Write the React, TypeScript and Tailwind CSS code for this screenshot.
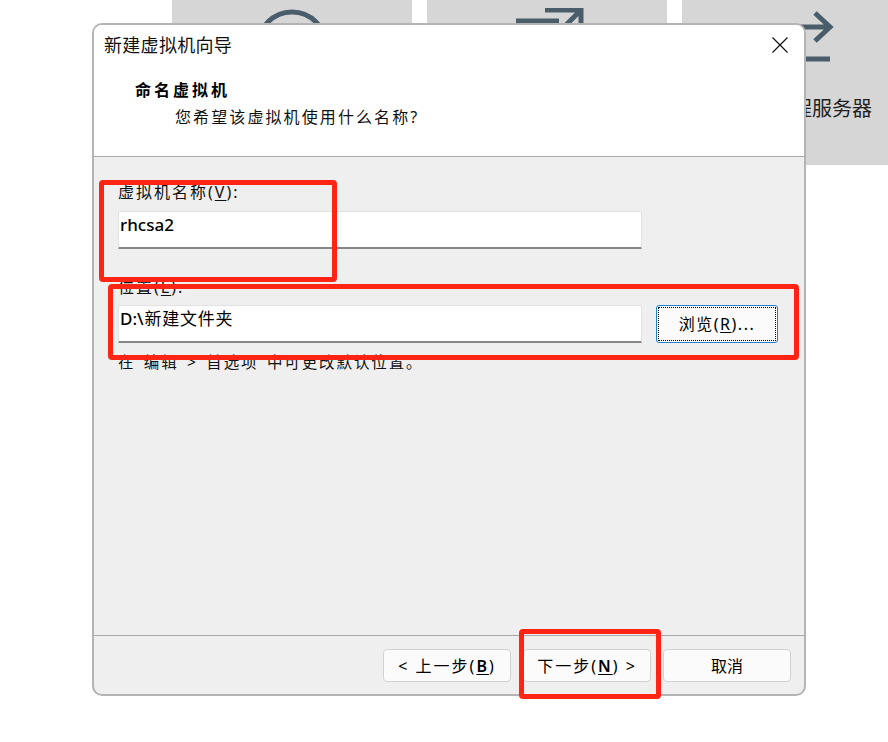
const iconColor = "#4a5d6b";

function Tile({ children, label }: { children: React.ReactNode; label?: string }) {
  return (
    <div className="w-[240px] h-[165px] shrink-0 bg-[#d6d6d6] flex flex-col items-center pt-[8px]">
      <svg width="100" height="70" viewBox="0 0 100 70" fill="none" stroke={iconColor} strokeWidth="5">
        {children}
      </svg>
      {label && <div className="mt-[17px] text-[20px] leading-[28px] text-[#222] whitespace-nowrap">{label}</div>}
    </div>
  );
}

function Mnemonic({ before, k, after }: { before: string; k: string; after?: string }) {
  return (
    <>
      {before}(<u className="underline-offset-2">{k}</u>){after}
    </>
  );
}

function WizardButton({ children, tracking }: { children: React.ReactNode; tracking?: boolean }) {
  return (
    <button className={`w-[128px] h-[33px] rounded-[4px] border border-[#d2d2d2] bg-[#fbfbfb] text-[16px] leading-none text-black whitespace-nowrap ${tracking ? "tracking-[2px]" : ""}`}>
      {children}
    </button>
  );
}

function TextField({ children }: { children: React.ReactNode }) {
  return (
    <div className="w-[524px] h-[38px] shrink-0 bg-white border border-[#e2e2e2] border-b-2 border-b-[#868686] rounded-[1px] pl-[1px] pt-[1px] text-[17px] leading-[24px] font-medium text-black">
      {children}
    </div>
  );
}

export default function App() {
  return (
    <div className="relative w-[888px] h-[742px] bg-white overflow-hidden font-['Noto_Sans','Noto_Sans_CJK_SC',sans-serif]">
      <div className="flex gap-[15px] pl-[172px]">
        <Tile>
          <circle cx="50" cy="38" r="34" />
        </Tile>
        <Tile>
          <path d="M21.5 60V13H62" />
          <path d="M48 2H84V20M84 2L50 36" />
        </Tile>
        <Tile label="连接远程服务器">
          <path d="M20 19H78M63 5L78 19L63 33" />
          <path d="M20 51H78" />
        </Tile>
      </div>

      {/* wizard window */}
      <div className="absolute left-[92px] top-[23px] w-[714px] h-[673px] flex flex-col rounded-[10px] border-2 border-[#b4b4b4] bg-[#efefef] overflow-hidden">
        <div className="relative h-[132px] shrink-0 bg-white border-b border-[#a8a8a8]">
          <div className="pl-[10px] pt-[8px] text-[18px] leading-[24px] tracking-[0.3px] text-[#111]">新建虚拟机向导</div>
          <svg className="absolute right-[16px] top-[12px]" width="16" height="16" viewBox="0 0 16 16" stroke="#111" strokeWidth="1.2">
            <path d="M0.5 0.5L15.5 15.5M15.5 0.5L0.5 15.5" />
          </svg>
          <div className="pl-[41px] pt-[21px] text-[16px] leading-[24px] font-bold tracking-[3px] text-black">命名虚拟机</div>
          <div className="pl-[81px] pt-[3px] text-[16px] leading-[24px] tracking-[2.1px] text-[#111]">您希望该虚拟机使用什么名称?</div>
        </div>

        <div className="flex-1 flex flex-col pl-[24px] pt-[23px]">
          <div className="h-[30px] text-[16px] leading-[24px] tracking-[2px] text-[#111]">
            <Mnemonic before="虚拟机名称" k="V" after=":" />
          </div>
          <div className="h-[38px] pt-[1px]">
            <TextField>rhcsa2</TextField>
          </div>
          <div className="mt-[27px] h-[30px] text-[16px] leading-[24px] tracking-[2px] text-[#111]">
            <Mnemonic before="位置" k="L" after=":" />
          </div>
          <div className="flex items-start gap-[14px]">
            <TextField>
              D:\<span className="ml-[1px] tracking-[0.7px] font-normal">新建文件夹</span>
            </TextField>
            <button className="w-[122px] h-[38px] rounded-[3px] border border-[#1f7fd0] bg-[#fbfbfb] p-[1px]">
              <span className="flex h-full w-full items-center justify-center border border-dotted border-black text-[16px] leading-none tracking-[1.5px] text-black">
                <Mnemonic before="浏览" k="R" after="..." />
              </span>
            </button>
          </div>
          <div className="mt-[7px] text-[15.5px] leading-[24px] tracking-[1.9px] [word-spacing:2.5px] text-[#111] whitespace-pre">在 编辑 &gt; 首选项 中可更改默认位置。</div>
        </div>

        <div className="h-[59px] shrink-0 border-t border-[#a8a8a8] flex justify-end gap-[12px] pr-[13px] pt-[13px]">
          <WizardButton tracking>&lt; 上一步(<u className="underline-offset-2 font-semibold">B</u>)</WizardButton>
          <WizardButton tracking>下一步(<u className="underline-offset-2 font-semibold">N</u>) &gt;</WizardButton>
          <WizardButton>取消</WizardButton>
        </div>
      </div>

      {/* red annotation boxes */}
      <div className="absolute left-[99px] top-[180px] w-[238px] h-[102px] rounded-[4px] border-[5px] border-[#ff2414]" />
      <div className="absolute left-[108px] top-[284px] w-[691px] h-[76px] rounded-[4px] border-[5px] border-[#ff2414]" />
      <div className="absolute left-[519px] top-[629px] w-[142px] h-[70px] rounded-[4px] border-[5px] border-[#ff2414]" />
    </div>
  );
}
